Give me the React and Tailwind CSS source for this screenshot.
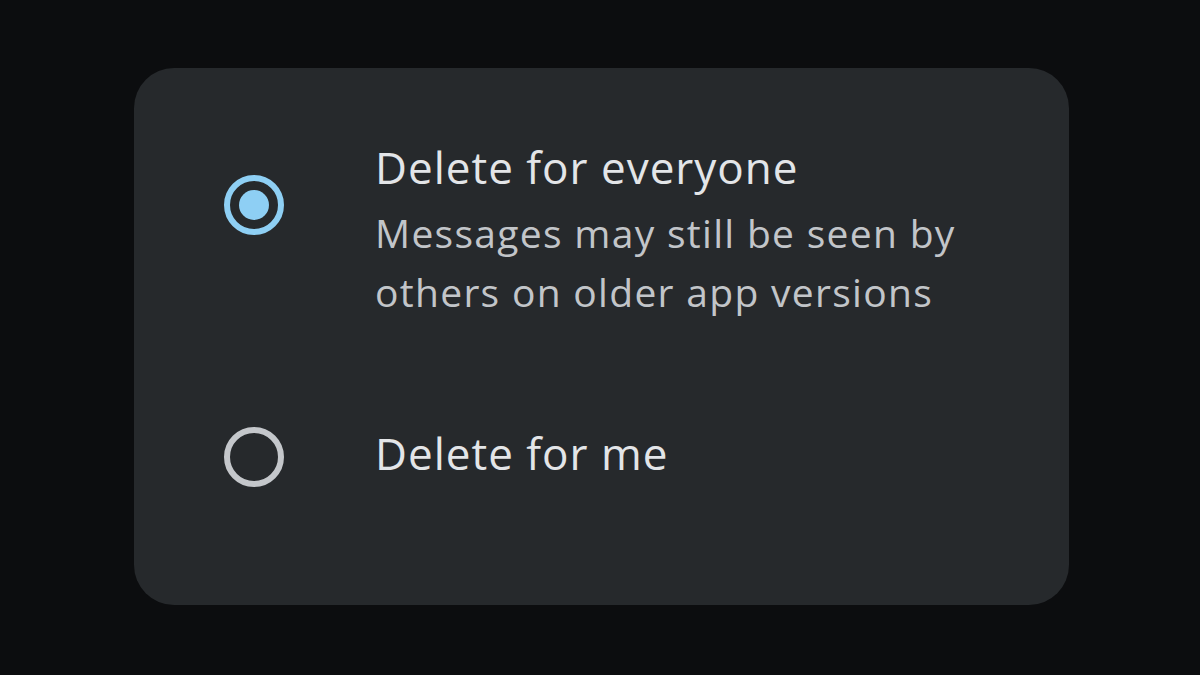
export default function App() {
  return (
    <div className="w-[1200px] h-[675px] bg-[#0c0d0f] pt-[68px] pl-[134px]" style={{ fontFamily: "'Open Sans', 'Noto Sans', sans-serif" }}>
      <div className="w-[935px] h-[537px] rounded-[40px] bg-[#26292c] flex flex-col">
        <div className="flex items-start pt-[73px]">
          <div className="ml-[90px] mt-[34px] w-[60px] h-[60px] rounded-full border-[6px] border-[#8ecff4] flex items-center justify-center shrink-0">
            <div className="w-[30px] h-[30px] rounded-full bg-[#8ecff4]" />
          </div>
          <div className="ml-[91px] flex flex-col">
            <div className="text-[44px] leading-[52px] tracking-[1px] text-[#e3e5e8]">Delete for everyone</div>
            <div className="text-[39px] leading-[59px] tracking-[1.3px] text-[#c2c5c9] mt-[10px]">
              Messages may still be seen by<br />others on older app versions
            </div>
          </div>
        </div>
        <div className="flex items-start mt-[106px]">
          <div className="ml-[90px] w-[60px] h-[60px] rounded-full border-[6px] border-[#c4c7cb] shrink-0" />
          <div className="ml-[91px] text-[44px] leading-[52px] tracking-[1px] text-[#e3e5e8]">Delete for me</div>
        </div>
      </div>
    </div>
  );
}
